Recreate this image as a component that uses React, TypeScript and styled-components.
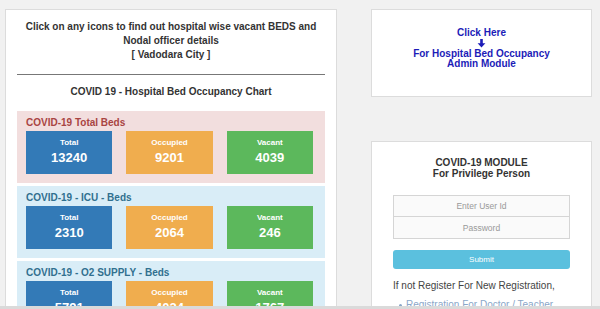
import React from "react";
import styled, { createGlobalStyle } from "styled-components";

const GlobalStyle = createGlobalStyle`
  html, body {
    margin: 0;
    padding: 0;
    background-color: #f1f1f1;
    font-family: "Liberation Sans", Arial, sans-serif;
    color: #333;
  }
  * {
    box-sizing: border-box;
  }
`;

const Page = styled.div`
  display: flex;
  align-items: flex-start;
  gap: 34px;
  padding: 9px 8px 0 5px;
  height: 309px;
  overflow: hidden;
  border-bottom: 3px solid #dadada;
`;

const LeftPanel = styled.div`
  width: 332px;
  background-color: #fff;
  border: 1px solid #dcdcdc;
  padding: 10px 11px 20px;
`;

const Intro = styled.div`
  text-align: center;
  font-size: 10px;
  font-weight: bold;
  line-height: 14px;
  color: #333;
`;

const Rule = styled.hr`
  margin: 12px 0 0;
  border: 0;
  border-top: 1px solid #777;
`;

const ChartTitle = styled.div`
  margin: 10px 0 12px;
  text-align: center;
  font-size: 10px;
  font-weight: bold;
  line-height: 14px;
  color: #333;
`;

const Section = styled.div<{ $tone: "danger" | "info" }>`
  background-color: ${(p) => (p.$tone === "danger" ? "#f2dede" : "#d9edf7")};
  padding: 5px 12px 9px 9px;
  margin-bottom: 3px;

  h4 {
    margin: 0 0 1px;
    font-size: 10px;
    line-height: 14px;
    font-weight: bold;
    color: ${(p) => (p.$tone === "danger" ? "#a94442" : "#31708f")};
  }
`;

const TileRow = styled.div`
  display: grid;
  grid-template-columns: repeat(3, 1fr);
  gap: 14px;
`;

const Tile = styled.div<{ $bg: string }>`
  height: 43px;
  background-color: ${(p) => p.$bg};
  color: #fff;
  text-align: center;
  padding-top: 7px;

  .label {
    font-size: 8px;
    font-weight: bold;
    line-height: 10px;
  }
  .value {
    margin-top: 2px;
    font-size: 13px;
    font-weight: bold;
    line-height: 16px;
  }
`;

const RightColumn = styled.div`
  width: 221px;
  display: flex;
  flex-direction: column;
  gap: 44px;
`;

const AdminBox = styled.a`
  display: block;
  height: 88px;
  background-color: #fff;
  border: 1px solid #dcdcdc;
  padding-top: 18px;
  text-align: center;
  font-size: 10px;
  line-height: 10.3px;
  font-weight: bold;
  color: #1c1cb8;
  text-decoration: none;

  svg {
    display: block;
    margin: 0 auto;
    width: 9px;
    height: 10.3px;
  }
`;

const LoginBox = styled.div`
  height: 200px;
  background-color: #fff;
  border: 1px solid #dcdcdc;
  padding: 16px 21px 0;
`;

const LoginTitle = styled.div`
  text-align: center;
  font-size: 10px;
  font-weight: bold;
  line-height: 10.5px;
  color: #333;
  margin-bottom: 16px;
`;

const Field = styled.input`
  display: block;
  width: 100%;
  height: 22px;
  border: 1px solid #d5d5d5;
  background-color: #fafafa;
  text-align: center;
  font-family: "Liberation Sans", Arial, sans-serif;
  font-size: 8.5px;
  color: #555;
  outline: none;

  & + & {
    border-top: none;
  }
  &::placeholder {
    color: #999;
  }
`;

const SubmitButton = styled.button`
  display: block;
  width: 100%;
  height: 19px;
  margin-top: 11px;
  border: none;
  border-radius: 3px;
  background-color: #5bc0de;
  color: #fff;
  font-family: "Liberation Sans", Arial, sans-serif;
  font-size: 8px;
`;

const Note = styled.p`
  margin: 11px 0 0;
  font-size: 10px;
  line-height: 11px;
  color: #444;
`;

const LinkList = styled.ul`
  margin: 8px 0 0;
  padding: 0;
  list-style: none;
  font-size: 10px;
  line-height: 11px;
  color: #8aa6c8;

  li {
    position: relative;
    padding-left: 13px;
  }
  li::before {
    content: "";
    position: absolute;
    left: 6px;
    top: 5px;
    width: 3px;
    height: 3px;
    border-radius: 50%;
    background-color: #8aa6c8;
  }
`;

type Stat = { title: string; tone: "danger" | "info"; total: number; occupied: number; vacant: number };

const stats: Stat[] = [
  { title: "COVID-19 Total Beds", tone: "danger", total: 13240, occupied: 9201, vacant: 4039 },
  { title: "COVID-19 - ICU - Beds", tone: "info", total: 2310, occupied: 2064, vacant: 246 },
  { title: "COVID-19 - O2 SUPPLY - Beds", tone: "info", total: 5791, occupied: 4024, vacant: 1767 },
];

const App = () => {
  return (
    <>
      <GlobalStyle />
      <Page>
        <LeftPanel>
          <Intro>
            Click on any icons to find out hospital wise vacant BEDS and
            <br />
            Nodal officer details
            <br />[ Vadodara City ]
          </Intro>
          <Rule />
          <ChartTitle>COVID 19 - Hospital Bed Occupancy Chart</ChartTitle>
          {stats.map((s) => (
            <Section $tone={s.tone} key={s.title}>
              <h4>{s.title}</h4>
              <TileRow>
                <Tile $bg="#337ab7">
                  <div className="label">Total</div>
                  <div className="value">{s.total}</div>
                </Tile>
                <Tile $bg="#f0ad4e">
                  <div className="label">Occupied</div>
                  <div className="value">{s.occupied}</div>
                </Tile>
                <Tile $bg="#5cb85c">
                  <div className="label">Vacant</div>
                  <div className="value">{s.vacant}</div>
                </Tile>
              </TileRow>
            </Section>
          ))}
        </LeftPanel>

        <RightColumn>
          <AdminBox href="#">
            Click Here
            <svg viewBox="0 0 9 10">
              <path d="M3.2 0.8h2.6v4.2h2.6L4.5 9.4 0.6 5h2.6z" fill="currentColor" />
            </svg>
            For Hospital Bed Occupancy
            <br />
            Admin Module
          </AdminBox>

          <LoginBox>
            <LoginTitle>
              COVID-19 MODULE
              <br />
              For Privilege Person
            </LoginTitle>
            <Field placeholder="Enter User Id" />
            <Field type="password" placeholder="Password" />
            <SubmitButton>Submit</SubmitButton>
            <Note>If not Register For New Registration,</Note>
            <LinkList>
              <li>Registration For Doctor / Teacher</li>
            </LinkList>
          </LoginBox>
        </RightColumn>
      </Page>
    </>
  );
};

export default App;
